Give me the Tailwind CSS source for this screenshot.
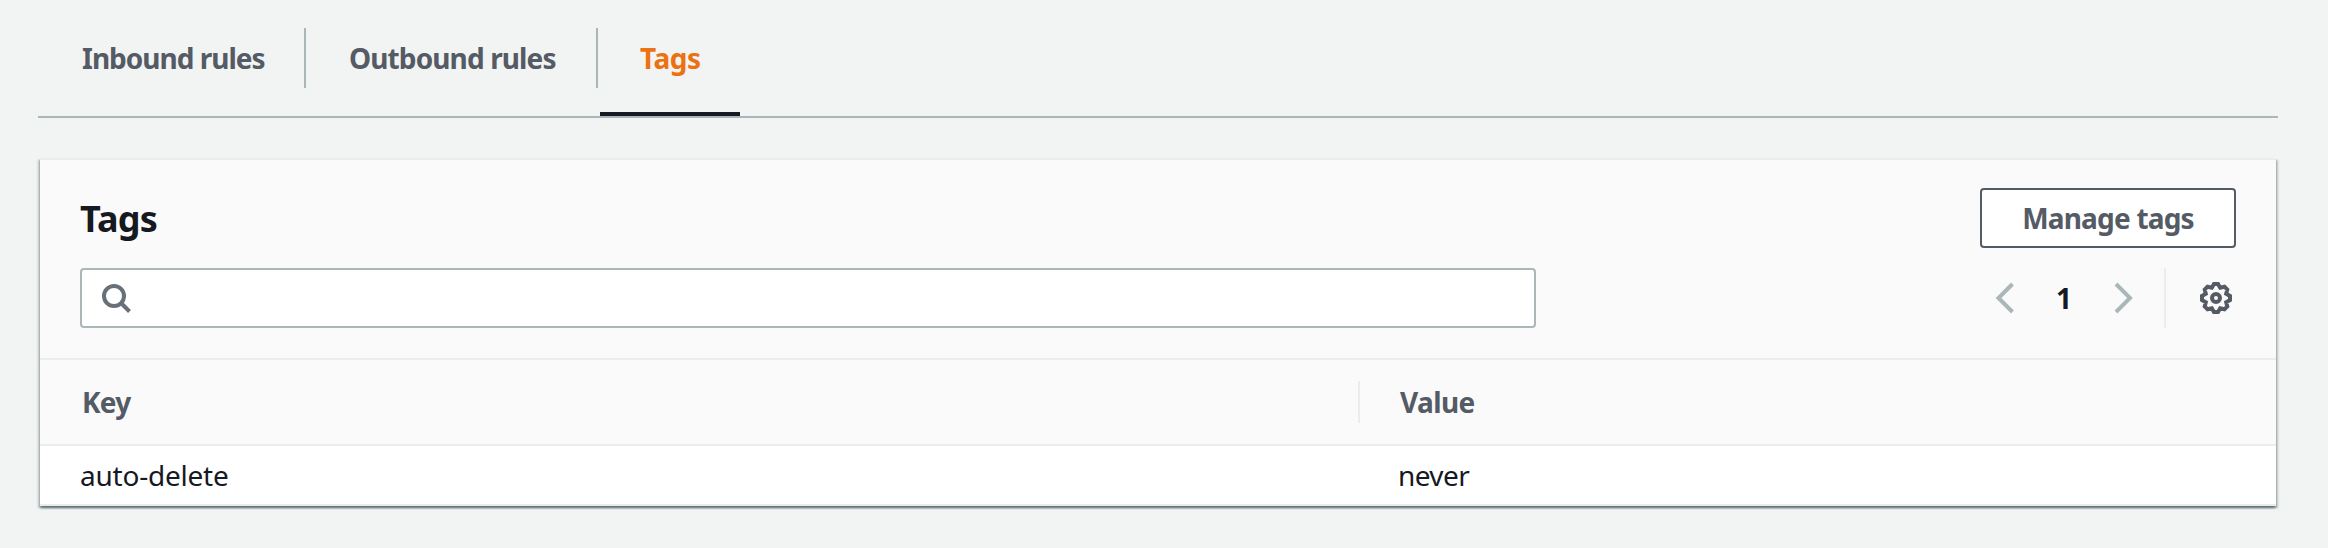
<!DOCTYPE html>
<html lang="en">
<head>
<meta charset="utf-8">
<title>Tags</title>
<script src="https://cdn.jsdelivr.net/npm/@tailwindcss/browser@4"></script>
</head>
<body class="h-[548px] w-[2328px] overflow-hidden bg-[#f2f3f3] pl-[38px] pr-[50px] font-['Noto_Sans',sans-serif] text-[28px] leading-[40px] text-[#16191f]">
  <nav class="flex h-[118px] border-b-2 border-[#aab7b8] pt-7 font-bold text-[#545b64]">
    <a class="h-[60px] w-[268px] border-r-2 border-[#aab7b8] pl-[44px] pt-[10px] whitespace-nowrap"><span class="tracking-[-1px]">Inbound rules</span></a>
    <a class="h-[60px] w-[292px] border-r-2 border-[#aab7b8] pl-[43px] pt-[10px] whitespace-nowrap"><span class="tracking-[-0.88px]">Outbound rules</span></a>
    <a class="ml-[2px] h-[88px] w-[140px] border-b-4 border-[#16191f] pl-[40px] pt-[10px] text-[#ec7211]"><span class="tracking-[-0.5px]">Tags</span></a>
  </nav>
  <section class="mt-10 ml-[2px] mr-[2px] h-[348px] border-y-2 border-[#eaeded] bg-[#fafafa] shadow-[0_2px_2px_0_rgba(0,28,36,0.4),2px_2px_2px_0_rgba(0,28,36,0.2),-2px_2px_2px_0_rgba(0,28,36,0.2)]">
    <header class="h-[200px] border-b-2 border-[#eaeded] px-10 pt-7">
      <div class="flex h-[60px] items-center justify-between">
        <h2 class="pt-[2px] text-[36px] font-bold tracking-[-0.8px]">Tags</h2>
        <button class="h-[60px] w-[256px] rounded-[4px] border-2 border-[#545b64] bg-white font-bold text-[#545b64]"><span class="tracking-[-0.8px]">Manage tags</span></button>
      </div>
      <div class="mt-5 flex h-[60px] items-center">
        <div class="flex h-[60px] w-[1456px] items-center rounded-[4px] border-2 border-[#aab7b8] bg-white pl-[18px]">
          <svg class="size-8" viewBox="0 0 32 32" fill="none" stroke="#687078" stroke-width="4"><circle cx="14" cy="14" r="10"/><path d="M21 21l8.500 8.500"/></svg>
        </div>
        <div class="ml-auto flex h-[60px] items-center">
          <svg class="size-8" viewBox="0 0 32 32" fill="none" stroke="#aab7b8" stroke-width="4"><path d="M24.500 2L10.500 16l14 14"/></svg>
          <span class="w-[88px] text-center font-bold">1</span>
          <svg class="size-8" viewBox="0 0 32 32" fill="none" stroke="#aab7b8" stroke-width="4"><path d="M8 2l14 14-14 14"/></svg>
          <div class="ml-6 mr-[34px] h-[60px] w-[2px] bg-[#eaeded]"></div>
          <svg class="mr-1 size-8" viewBox="-16 -16 32 32" fill="none" stroke="#545b64" stroke-width="4" stroke-linejoin="miter">
            <path d="M-2-14H2L4.200-10.200L8.500-11.300L11.300-8.500L10.200-4.200L14-2V2L10.200 4.200L11.300 8.500L8.500 11.300L4.200 10.200L2 14H-2L-4.200 10.200L-8.500 11.300L-11.300 8.500L-10.200 4.200L-14 2V-2L-10.200-4.200L-11.300-8.500L-8.500-11.300L-4.200-10.200Z"/>
            <circle r="4"/>
          </svg>
        </div>
      </div>
    </header>
    <div class="flex h-[86px] items-center border-b-2 border-[#eaeded] font-bold text-[#545b64]">
      <div class="flex h-[42px] w-[1320px] items-center border-r-2 border-[#eaeded] pl-[42px]"><span class="tracking-[-0.8px]">Key</span></div>
      <div class="pl-[40px]"><span class="tracking-[-0.6px]">Value</span></div>
    </div>
    <div class="flex h-[58px] items-center bg-white">
      <div class="w-[1320px] pl-[40px]"><span class="tracking-[-0.22px]">auto-delete</span></div>
      <div class="pl-[38px]"><span class="tracking-[-0.6px]">never</span></div>
    </div>
  </section>
</body>
</html>
